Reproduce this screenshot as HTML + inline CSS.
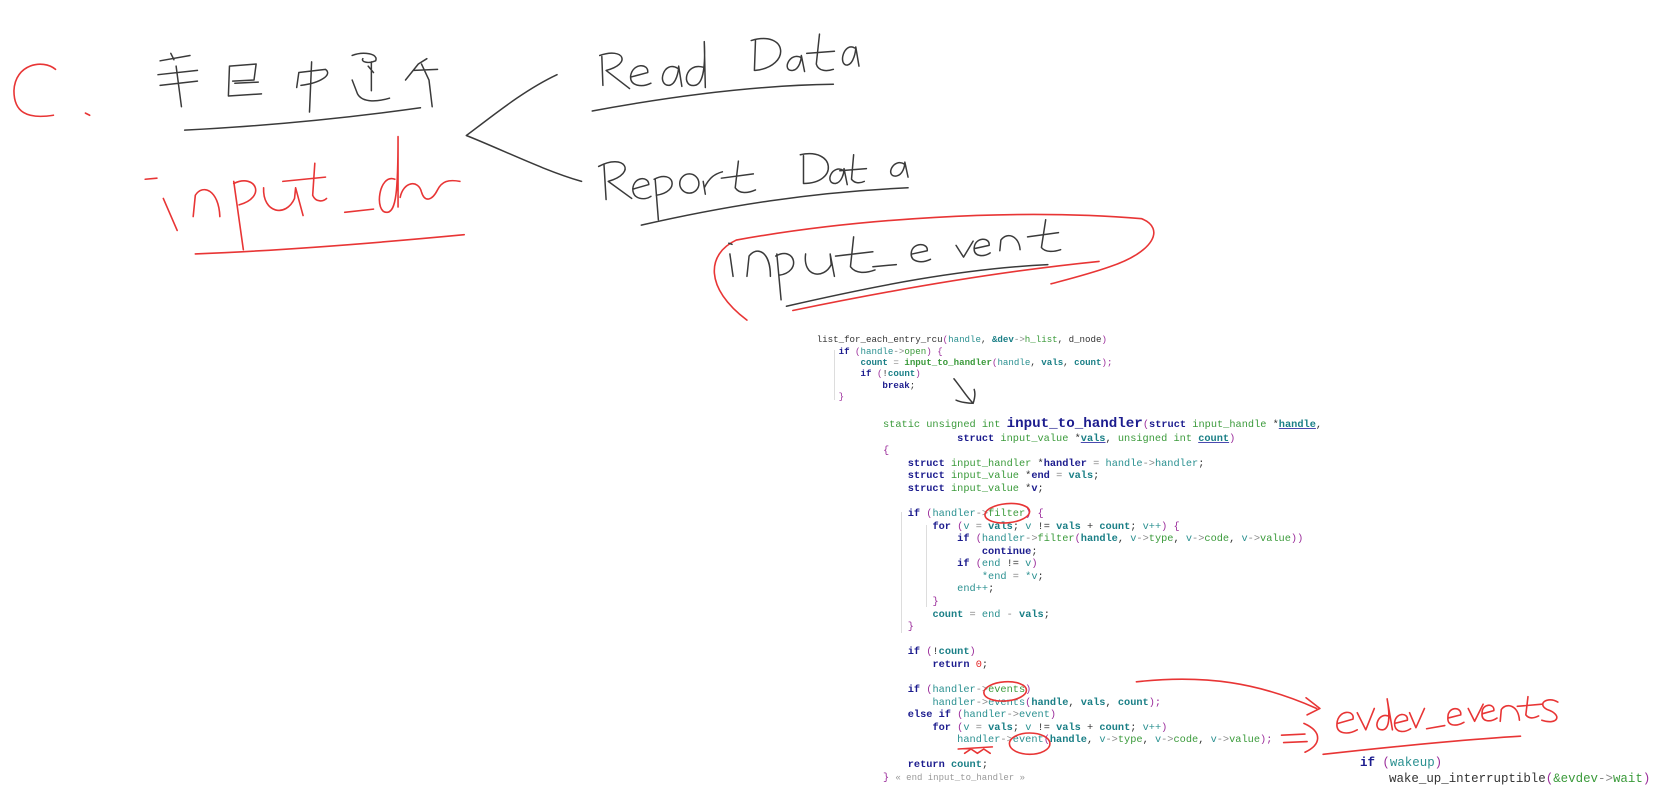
<!DOCTYPE html>
<html><head><meta charset="utf-8">
<style>
html,body{margin:0;padding:0;background:#fff;}
body{width:1671px;height:803px;position:relative;overflow:hidden;}
pre,.l{margin:0;position:absolute;white-space:pre;font-family:"Liberation Mono",monospace;color:#333;}
.k{color:#1c1c8e;font-weight:bold}
.b{color:#1a7f86;font-weight:bold}
.m{color:#2a9090}
.g{color:#3a9a3a}
.p{color:#9b2d9b}
.o{color:#888}
.r{color:#e02020}
.u{text-decoration:underline;text-decoration-color:#4a4ab0}
.gl{position:absolute;background:#ddd;width:1px}
</style></head><body>

<pre style="left:816.7px;top:334.3px;font-size:9.15px;line-height:11.33px;">list_for_each_entry_rcu<span class="p">(</span><span class="m">handle</span>, <span class="b">&amp;dev</span><span class="o">-&gt;</span><span class="g">h_list</span>, d_node<span class="p">)</span>
    <span class="k">if</span> <span class="p">(</span><span class="m">handle</span><span class="o">-&gt;</span><span class="g">open</span><span class="p">)</span> <span class="p">{</span>
        <span class="b">count</span> <span class="o">=</span> <span class="g" style="font-weight:bold">input_to_handler</span><span class="p">(</span><span class="m">handle</span>, <span class="b">vals</span>, <span class="b">count</span><span class="p">);</span>
        <span class="k">if</span> <span class="p">(</span>!<span class="b">count</span><span class="p">)</span>
            <span class="k">break</span>;
    <span class="p">}</span></pre>
<div class="gl" style="left:834px;top:350px;height:50px"></div>

<div class="l" style="left:883px;top:415px;font-size:10.3px;line-height:18px;"><span class="g">static unsigned int </span><span class="k" style="font-size:14.2px">input_to_handler</span><span class="p">(</span><span class="k">struct</span> <span class="g">input_handle</span> *<span class="b u">handle</span>,</div>

<pre style="left:883px;top:432.7px;font-size:10.3px;line-height:12.56px;">            <span class="k">struct</span> <span class="g">input_value</span> *<span class="b u">vals</span>, <span class="g">unsigned int</span> <span class="b u">count</span><span class="p">)</span>
<span class="p">{</span>
    <span class="k">struct</span> <span class="g">input_handler</span> *<span class="k">handler</span> <span class="o">=</span> <span class="m">handle</span><span class="o">-&gt;</span><span class="m">handler</span>;
    <span class="k">struct</span> <span class="g">input_value</span> *<span class="k">end</span> <span class="o">=</span> <span class="b">vals</span>;
    <span class="k">struct</span> <span class="g">input_value</span> *<span class="k">v</span>;

    <span class="k">if</span> <span class="p">(</span><span class="m">handler</span><span class="o">-&gt;</span><span class="g">filter</span><span class="p">)</span> <span class="p">{</span>
        <span class="k">for</span> <span class="p">(</span><span class="m">v</span> <span class="o">=</span> <span class="b">vals</span>; <span class="m">v</span> != <span class="b">vals</span> + <span class="b">count</span>; <span class="m">v++</span><span class="p">)</span> <span class="p">{</span>
            <span class="k">if</span> <span class="p">(</span><span class="m">handler</span><span class="o">-&gt;</span><span class="g">filter</span><span class="p">(</span><span class="b">handle</span>, <span class="m">v</span><span class="o">-&gt;</span><span class="g">type</span>, <span class="m">v</span><span class="o">-&gt;</span><span class="g">code</span>, <span class="m">v</span><span class="o">-&gt;</span><span class="g">value</span><span class="p">))</span>
                <span class="k">continue</span>;
            <span class="k">if</span> <span class="p">(</span><span class="m">end</span> != <span class="m">v</span><span class="p">)</span>
                <span class="m">*end</span> <span class="o">=</span> <span class="m">*v</span>;
            <span class="m">end++</span>;
        <span class="p">}</span>
        <span class="b">count</span> <span class="o">=</span> <span class="m">end</span> <span class="o">-</span> <span class="b">vals</span>;
    <span class="p">}</span>

    <span class="k">if</span> <span class="p">(</span>!<span class="b">count</span><span class="p">)</span>
        <span class="k">return</span> <span class="r">0</span>;

    <span class="k">if</span> <span class="p">(</span><span class="m">handler</span><span class="o">-&gt;</span><span class="g">events</span><span class="p">)</span>
        <span class="m">handler</span><span class="o">-&gt;</span><span class="m">events</span><span class="p">(</span><span class="b">handle</span>, <span class="b">vals</span>, <span class="b">count</span><span class="p">);</span>
    <span class="k">else if</span> <span class="p">(</span><span class="m">handler</span><span class="o">-&gt;</span><span class="m">event</span><span class="p">)</span>
        <span class="k">for</span> <span class="p">(</span><span class="m">v</span> <span class="o">=</span> <span class="b">vals</span>; <span class="m">v</span> != <span class="b">vals</span> + <span class="b">count</span>; <span class="m">v++</span><span class="p">)</span>
            <span class="m">handler</span><span class="o">-&gt;</span><span class="m">event</span><span class="p">(</span><span class="b">handle</span>, <span class="m">v</span><span class="o">-&gt;</span><span class="g">type</span>, <span class="m">v</span><span class="o">-&gt;</span><span class="g">code</span>, <span class="m">v</span><span class="o">-&gt;</span><span class="g">value</span><span class="p">);</span>

    <span class="k">return</span> <span class="b">count</span>;
<span class="p">}</span> <span style="color:#999;font-size:9px">« end input_to_handler »</span></pre>
<div class="gl" style="left:901px;top:512px;height:121px"></div>
<div class="gl" style="left:926px;top:525px;height:82px"></div>

<div class="l" style="left:1360px;top:755px;font-size:12.45px;line-height:16px;"><span class="k">if</span> <span class="p">(</span><span class="m">wakeup</span><span class="p">)</span></div>
<div class="l" style="left:1389px;top:771px;font-size:12.45px;line-height:16px;">wake_up_interruptible<span class="p">(</span><span class="g">&amp;evdev</span><span class="o">-&gt;</span><span class="g">wait</span><span class="p">)</span></div>

<svg width="1671" height="803" viewBox="0 0 1566 752.6" style="position:absolute;left:0;top:0" fill="none" stroke-linecap="round" stroke-linejoin="round">
<g stroke="#e83535" stroke-width="1.5">
<path d="M52,65 C40,55 14,60 13,85 C13,105 25,112 50,108"/>
<path d="M80,106 L84,108"/>
<path d="M136,168 L147,167 M153,186 L166,216"/>
<path d="M181,203 L183,183 C190,172 205,178 206,203"/>
<path d="M219,170 L228,234 M219,172 C240,162 250,185 224,192"/>
<path d="M247,176 C246,200 268,204 276,186 L277,176 L284,202"/>
<path d="M295,153 L293,183 C296,190 303,189 306,186 M265,170 L305,166"/>
<path d="M323,199 L350,196"/>
<path d="M370,168 C355,162 350,200 363,199 C371,198 373,180 373,128 L373,194"/>
<path d="M375,185 C378,170 392,168 395,180 C398,190 405,188 410,178 C414,170 420,168 431,170"/>
<path d="M183,238 C260,235 350,228 435,220"/>
<path d="M700,300 C660,270 662,238 690,225 C800,205 950,195 1070,205 C1092,214 1082,236 1040,250 C1020,257 1000,262 985,266"/>
<path d="M743,291 C830,273 930,255 1030,245"/>
<ellipse cx="944" cy="481" rx="21" ry="9" transform="rotate(-5 944 481)"/>
<ellipse cx="942" cy="648" rx="20" ry="9" transform="rotate(-4 942 648)"/>
<ellipse cx="965" cy="697" rx="19" ry="10"/>
<path d="M898,702 L930,700 M904,706 L910,702 L916,706 L922,702 L928,706"/>
<path d="M1065,639 C1130,632 1180,640 1234,664 M1224,654 L1237,664 L1225,670"/>
<path d="M1201,689 L1223,688 M1203,696 L1225,695 M1222,678 C1240,686 1238,698 1223,705"/>
<path d="M1254,678 L1268,674 C1270,665 1254,665 1253,678 C1252,688 1263,689 1272,684"/>
<path d="M1272,668 L1280,684 L1288,664"/>
<path d="M1303,672 C1292,665 1285,685 1296,684 C1302,683 1303,672 1300,655 L1305,684"/>
<path d="M1307,678 L1319,675 C1320,667 1307,668 1307,678 C1307,687 1316,687 1322,683"/>
<path d="M1321,668 L1327,682 L1335,664"/>
<path d="M1337,683 L1354,680"/>
<path d="M1357,673 L1369,670 C1370,662 1357,662 1357,672 C1356,681 1365,681 1372,677"/>
<path d="M1376,664 L1382,676 L1390,660"/>
<path d="M1389,669 L1400,666 C1401,659 1389,659 1389,668 C1388,677 1397,677 1403,673"/>
<path d="M1406,676 L1407,665 C1412,658 1423,661 1424,675"/>
<path d="M1432,653 L1430,670 C1433,674 1438,673 1442,671 M1422,662 L1445,660"/>
<path d="M1460,658 C1450,652 1440,660 1450,665 C1465,670 1460,680 1445,675"/>
<path d="M1240,707 C1320,698 1390,692 1425,690"/>
</g>
<g stroke="#3a3a3a" stroke-width="1.4">
<path d="M150,57 L178,52 M160,50 L163,56 M148,70 L185,66 M165,62 L170,100 M150,80 L185,76"/>
<path d="M215,62 L240,60 L238,75 L218,76 M215,62 L214,90 L245,88 M220,78 L242,77"/>
<path d="M280,68 L278,82 M280,68 L305,65 C312,70 300,78 282,80 M292,58 L290,105"/>
<path d="M330,52 C340,48 355,50 352,57 C345,60 338,58 340,55 M345,62 L350,68 M330,75 L335,88 C340,97 355,95 365,92 M348,58 L348,85"/>
<path d="M380,75 L392,60 L400,55 M395,60 L402,75 L405,100 M388,66 L410,65"/>
<path d="M173,122 C250,118 330,110 394,101"/>
<path d="M522,70 C490,85 460,110 437,127 C470,140 510,160 545,170"/>
<path d="M562,52 C585,44 592,60 568,66 L590,83 M564,53 L565,80"/>
<path d="M592,72 L607,68 C608,59 593,59 591,71 C590,81 602,82 610,78"/>
<path d="M635,64 C622,56 615,80 627,80 C634,79 636,66 636,62 L639,81"/>
<path d="M659,63 C642,58 638,82 651,80 C660,79 661,58 660,39 L661,82"/>
<path d="M708,38 L707,66 M704,38 C738,28 742,62 708,66"/>
<path d="M751,54 C740,48 732,67 743,66 C749,65 751,56 751,52 L754,67"/>
<path d="M768,32 L765,60 C767,67 775,67 781,65 M756,50 L782,48"/>
<path d="M801,45 C791,39 785,61 794,61 C800,60 802,48 802,44 L805,62"/>
<path d="M555,104 C620,92 700,80 781,79"/>
<path d="M561,156 C585,143 598,162 570,170 L592,186 M566,154 L568,187"/>
<path d="M594,177 L608,173 C608,165 594,165 593,177 C593,187 604,188 610,184"/>
<path d="M614,168 L617,206 M613,168 C632,158 638,180 615,183"/>
<ellipse cx="646" cy="172" rx="9" ry="9"/>
<path d="M659,170 L661,182 M660,176 C665,166 670,163 677,161"/>
<path d="M692,151 L689,176 C693,182 701,181 708,178 M676,167 L706,163"/>
<path d="M753,146 L753,172 M750,145 C783,138 786,172 753,172"/>
<path d="M791,160 C780,153 772,172 783,172 C789,171 791,162 791,158 L794,173"/>
<path d="M800,145 L798,168 C801,172 806,172 810,170 M787,160 L812,158"/>
<path d="M848,154 C837,147 829,166 840,165 C846,164 848,156 848,152 L851,166"/>
<path d="M601,211 C680,193 760,180 851,176"/>
<path d="M684,238 L687,259 M683,228 L686,229"/>
<path d="M700,259 L702,240 C710,230 722,236 722,259"/>
<path d="M728,238 L732,281 M727,240 C745,230 752,255 730,258"/>
<path d="M755,238 C752,260 772,262 779,248 L778,238 L782,259"/>
<path d="M800,222 L797,250 C802,257 812,256 820,253 M783,240 L818,236"/>
<path d="M818,250 L840,248"/>
<path d="M855,238 L869,235 C870,227 855,227 854,237 C853,246 864,247 872,243"/>
<path d="M896,230 L903,241 L912,226"/>
<path d="M913,233 L927,230 C928,222 914,222 913,232 C912,241 922,241 928,237"/>
<path d="M937,235 L938,225 C944,217 955,221 956,234"/>
<path d="M980,206 L976,232 C980,237 988,236 994,234 M963,222 L992,218"/>
<path d="M737,287 C820,268 900,252 982,248"/>
<path d="M894,355 C902,365 906,372 912,378 C908,378 900,377 896,375 M912,378 C914,372 914,368 913,365"/>
</g>
</svg>
</body></html>
